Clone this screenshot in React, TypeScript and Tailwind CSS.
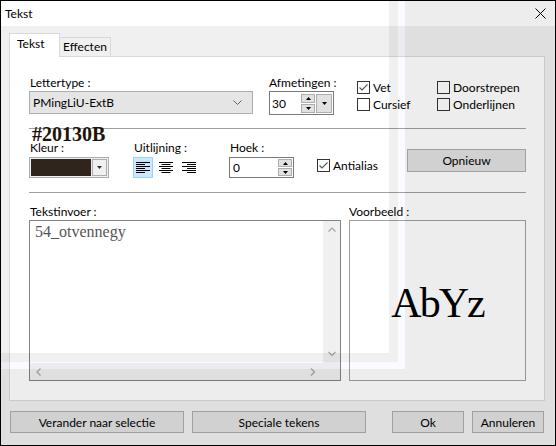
import React from "react";

const sans = "font-['Lato','Noto_Sans',sans-serif]";
const serif = "font-['Liberation_Serif','Times_New_Roman',serif]";

function TriDown({ color = "#000" }: { color?: string }) {
  return (
    <svg width="5" height="3" viewBox="0 0 5 3" className="block">
      <path d="M0 0 H5 L2.5 3 Z" fill={color} />
    </svg>
  );
}
function TriUp() {
  return (
    <svg width="5" height="3" viewBox="0 0 5 3" className="block">
      <path d="M0 3 H5 L2.5 0 Z" fill="#000" />
    </svg>
  );
}

function CheckMark() {
  return (
    <svg width="11" height="11" viewBox="0 0 11 11" className="block">
      <path d="M1.5 5.5 L4 8 L9.5 2.5" fill="none" stroke="#555" strokeWidth="1.1" />
    </svg>
  );
}

function Checkbox({ checked, label }: { checked?: boolean; label: string }) {
  return (
    <div className="flex h-[13px] items-center">
      <div className="flex h-[13px] w-[13px] shrink-0 items-center justify-center border border-[#333] bg-white">
        {checked && <CheckMark />}
      </div>
      <span className="ml-[3px] whitespace-nowrap leading-[15px]">{label}</span>
    </div>
  );
}

function SpinButtons({ h = 9 }: { h?: number }) {
  return (
    <div className="flex w-[14px] flex-col gap-px">
      <div className={`flex ${h === 9 ? "h-[9px]" : "h-[8px]"} items-center justify-center border border-[#adadad] bg-[#e1e1e1]`}>
        <TriUp />
      </div>
      <div className={`flex ${h === 9 ? "h-[9px]" : "h-[8px]"} items-center justify-center border border-[#adadad] bg-[#e1e1e1]`}>
        <TriDown />
      </div>
    </div>
  );
}

function AlignIcon({ kind }: { kind: "left" | "center" | "right" }) {
  const rows = [14, 9, 14, 9, 14, 9];
  return (
    <svg width="14" height="11" viewBox="0 0 14 11" className="block">
      {rows.map((w, i) => {
        const x = kind === "left" ? 0 : kind === "center" ? (14 - w) / 2 : 14 - w;
        return <rect key={i} x={x} y={i * 2} width={w} height="1" fill="#000" />;
      })}
    </svg>
  );
}

function Chevron({ dir, color = "#a3a3a3" }: { dir: "up" | "down" | "left" | "right"; color?: string }) {
  const d =
    dir === "up"
      ? "M0.5 4.5 L4 1 L7.5 4.5"
      : dir === "down"
      ? "M0.5 1 L4 4.5 L7.5 1"
      : dir === "left"
      ? "M4.5 0.5 L1 4 L4.5 7.5"
      : "M1 0.5 L4.5 4 L1 7.5";
  const vert = dir === "up" || dir === "down";
  return (
    <svg
      width={vert ? 8 : 6}
      height={vert ? 6 : 8}
      viewBox={vert ? "0 0 8 6" : "0 0 6 8"}
      className="block"
    >
      <path d={d} fill="none" stroke={color} strokeWidth="1.2" />
    </svg>
  );
}

function Button({ label, w }: { label: string; w: string }) {
  return (
    <div className={`flex h-[22px] ${w} items-center justify-center whitespace-nowrap border border-[#adadad] bg-[#e1e1e1] leading-[15px]`}>
      {label}
    </div>
  );
}

export default function App() {
  return (
    <div className={`relative h-[446px] w-[556px] overflow-hidden text-[12px] text-black ${sans}`}>
      <div className="flex h-[446px] w-[556px] flex-col border border-black bg-[#f0f0f0]">
        {/* title bar */}
        <div className="flex h-[25px] items-center justify-between bg-white pl-[4px] pr-[9px]">
          <span className="leading-[15px]">Tekst</span>
          <svg width="11" height="11" viewBox="0 0 11 11" className="block">
            <path d="M0.5 0.5 L10.5 10.5 M10.5 0.5 L0.5 10.5" stroke="#000" strokeWidth="1" />
          </svg>
        </div>

        {/* tabs */}
        <div className="mt-[7px] flex h-[23px] items-end pl-[8px]">
          <div className="relative z-10 -mb-px h-[24px] w-[51px] border-x border-t border-[#d9d9d9] bg-white pl-[7px] pt-[2px] leading-[15px]">
            Tekst
          </div>
          <div className="h-[19px] w-[51px] border-r border-t border-[#d9d9d9] bg-[#f0f0f0] pt-px text-center leading-[15px]">
            Effecten
          </div>
        </div>

        {/* panel */}
        <div className="ml-[8px] h-[345px] w-[536px] border border-[#d9d9d9] bg-white pl-[19px] pr-[18px] pt-[18px]">
          {/* row 1 */}
          <div className="flex h-[40px] items-start">
            <div className="flex w-[224px] flex-col">
              <span className="h-[15px] whitespace-nowrap pl-px leading-[15px]">Lettertype :</span>
              <div className="mt-px flex h-[23px] items-center justify-between border border-[#adadad] bg-[#e5e5e5] pl-[3px] pr-[10px]">
                <span className="leading-[15px]">PMingLiU-ExtB</span>
                <svg width="9" height="5" viewBox="0 0 9 5" className="block">
                  <path d="M0.5 0.5 L4.5 4.5 L8.5 0.5" fill="none" stroke="#606060" strokeWidth="1" />
                </svg>
              </div>
            </div>
            <div className="ml-[16px] flex w-[65px] flex-col">
              <span className="h-[15px] whitespace-nowrap leading-[15px]">Afmetingen :</span>
              <div className="mt-px flex h-[24px] items-center border border-[#7a7a7a] bg-white pl-[2px] pr-px">
                <span className="flex-1 leading-[15px]">30</span>
                <SpinButtons />
                <div className="ml-px flex h-[19px] w-[16px] items-center justify-center border border-[#adadad] bg-[#e1e1e1]">
                  <TriDown />
                </div>
              </div>
            </div>
            <div className="ml-[23px] mt-[6px] flex w-[80px] flex-col gap-[4px]">
              <Checkbox checked label="Vet" />
              <Checkbox label="Cursief" />
            </div>
            <div className="mt-[6px] flex flex-col gap-[4px]">
              <Checkbox label="Doorstrepen" />
              <Checkbox label="Onderlijnen" />
            </div>
          </div>

          {/* separator 1 */}
          <div className="mt-[13px] h-px bg-[#a0a0a0]" />

          <div className={`h-[11px] pl-[3px] text-[20px] font-bold leading-[11px] text-[#20130b] ${serif}`}>#20130B</div>

          {/* row 2 */}
          <div className="flex h-[38px] items-start">
            <div className="flex w-[80px] flex-col">
              <span className="h-[15px] whitespace-nowrap pl-px leading-[15px]">Kleur :</span>
              <div className="mt-[2px] flex h-[21px] items-stretch border border-[#adadad] bg-[#f0f0f0] p-px">
                <div className="w-[60px] bg-[#30251d]" />
                <div className="ml-px flex flex-1 items-center justify-center border border-[#adadad] bg-[#f0f0f0]">
                  <TriDown color="#333" />
                </div>
              </div>
            </div>
            <div className="ml-[24px] flex w-[66px] flex-col">
              <span className="h-[15px] whitespace-nowrap pl-px leading-[15px]">Uitlijning :</span>
              <div className="mt-[2px] flex gap-[3px]">
                <div className="flex h-[21px] w-[20px] items-center justify-center border border-[#99d1ff] bg-[#cce8ff]">
                  <AlignIcon kind="left" />
                </div>
                <div className="flex h-[21px] w-[20px] items-center justify-center">
                  <AlignIcon kind="center" />
                </div>
                <div className="flex h-[21px] w-[20px] items-center justify-center">
                  <AlignIcon kind="right" />
                </div>
              </div>
            </div>
            <div className="ml-[30px] flex w-[65px] flex-col">
              <span className="h-[15px] whitespace-nowrap pl-px leading-[15px]">Hoek :</span>
              <div className="mt-[2px] flex h-[21px] items-center border border-[#7a7a7a] bg-white pl-[3px] pr-px">
                <span className="flex-1 leading-[15px]">0</span>
                <SpinButtons h={8} />
              </div>
            </div>
            <div className="ml-[23px] mt-[19px]">
              <Checkbox checked label="Antialias" />
            </div>
            <div className="ml-auto mt-[9px] flex h-[23px] w-[119px] items-center justify-center border border-[#adadad] bg-[#e1e1e1] leading-[15px]">
              Opnieuw
            </div>
          </div>

          {/* separator 2 */}
          <div className="mt-[14px] h-px bg-[#a0a0a0]" />

          {/* row 3 */}
          <div className="mt-[11px] flex gap-[8px]">
            <div className="flex w-[312px] flex-col">
              <span className="h-[15px] whitespace-nowrap pl-px leading-[15px]">Tekstinvoer :</span>
              <div className="mt-px flex h-[161px] flex-col border border-[#828282] bg-white">
                <div className="flex flex-1">
                  <div className={`flex-1 pl-[5px] pt-[2px] text-[16px] leading-[18px] text-[#555] ${serif}`}>54_otvennegy</div>
                  <div className="flex w-[17px] flex-col items-center justify-between bg-[#f0f0f0] py-[6px]">
                    <Chevron dir="up" />
                    <Chevron dir="down" />
                  </div>
                </div>
                <div className="flex h-[17px]">
                  <div className="flex flex-1 items-center justify-between bg-[#f0f0f0] pl-[6px] pr-[7px]">
                    <Chevron dir="left" />
                    <Chevron dir="right" />
                  </div>
                  <div className="w-[17px] bg-[#f0f0f0]" />
                </div>
              </div>
            </div>
            <div className="flex w-[177px] flex-col">
              <span className="h-[15px] whitespace-nowrap leading-[15px]">Voorbeeld :</span>
              <div className="mt-px flex h-[161px] items-center justify-center border border-[#a0a0a0] bg-white pt-[4px]">
                <span className={`text-[42px] leading-[48px] tracking-[-2px] text-black ${serif}`}>AbYz</span>
              </div>
            </div>
          </div>
        </div>

        {/* bottom buttons */}
        <div className="mt-[10px] flex pl-[9px]">
          <Button label="Verander naar selectie" w="w-[174px]" />
          <div className="ml-[8px]">
            <Button label="Speciale tekens" w="w-[174px]" />
          </div>
          <div className="ml-[26px]">
            <Button label="Ok" w="w-[72px]" />
          </div>
          <div className="ml-[8px]">
            <Button label="Annuleren" w="w-[72px]" />
          </div>
        </div>
      </div>

      {/* translucent overlay frame lying over the dialog (screen artefact) */}
      <div className="pointer-events-none absolute left-[405px] top-0 h-[446px] w-[151px] bg-black/[0.07]" />
      <div className="pointer-events-none absolute left-0 top-[369px] h-[77px] w-[405px] bg-black/[0.07]" />
      <div className="pointer-events-none absolute left-[389px] top-0 h-[362px] w-[9px] bg-black/[0.06]" />
      <div className="pointer-events-none absolute left-0 top-[353px] h-[9px] w-[389px] bg-black/[0.06]" />
      <div className="pointer-events-none absolute left-[398px] top-0 h-[369px] w-[7px] bg-[#2040ff]/[0.025]" />
      <div className="pointer-events-none absolute left-0 top-[362px] h-[7px] w-[398px] bg-[#2040ff]/[0.025]" />
    </div>
  );
}
